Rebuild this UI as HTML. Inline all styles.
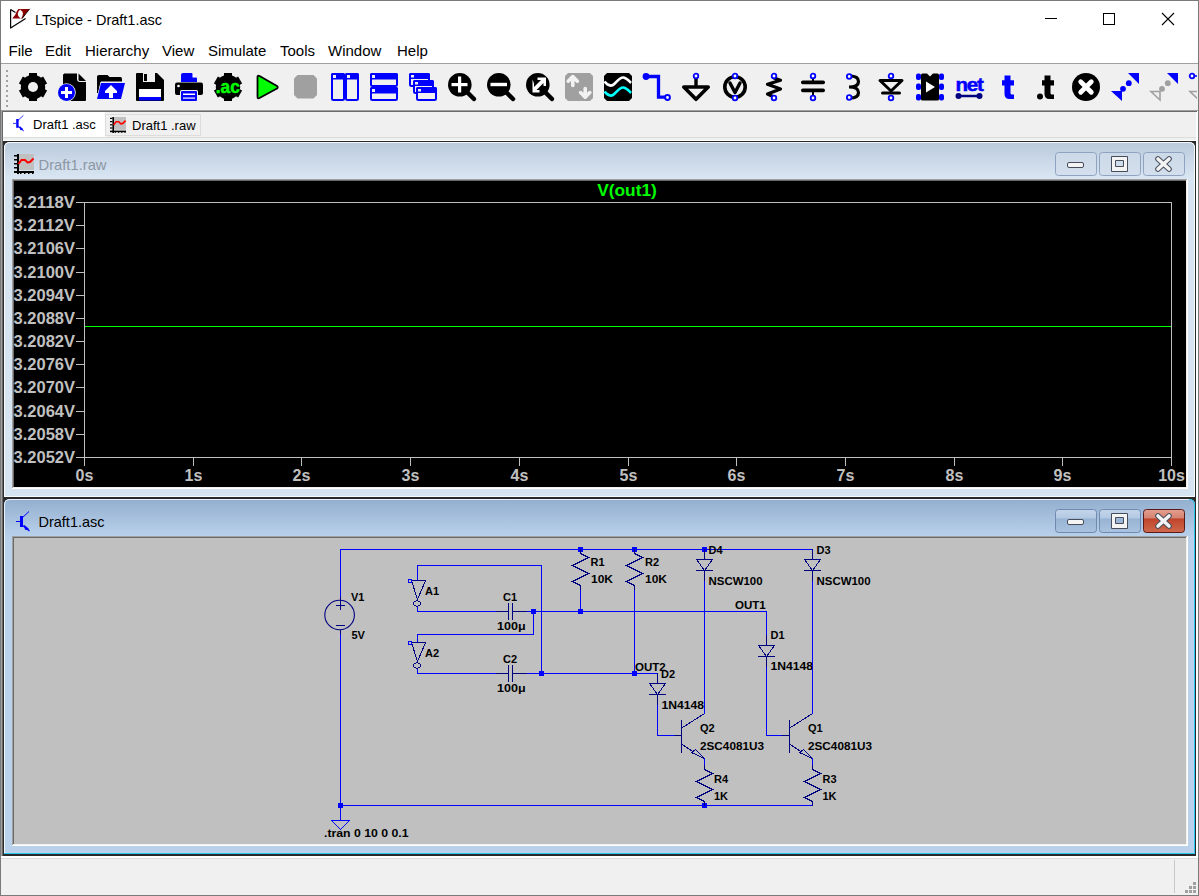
<!DOCTYPE html>
<html><head><meta charset="utf-8">
<style>
html,body{margin:0;padding:0;}
body{width:1199px;height:896px;position:relative;overflow:hidden;background:#f0f0f0;font-family:"Liberation Sans",sans-serif;}
svg{position:absolute;left:0;top:0;}
text{font-family:"Liberation Sans",sans-serif;}
</style></head><body>
<svg width="1199" height="896" viewBox="0 0 1199 896">
<defs>
<linearGradient id="tiA" x1="0" y1="0" x2="0" y2="1">
<stop offset="0" stop-color="#bacadc"/><stop offset="1" stop-color="#dae6f3"/>
</linearGradient>
<linearGradient id="tiB" x1="0" y1="0" x2="0" y2="1">
<stop offset="0" stop-color="#93afcf"/><stop offset="1" stop-color="#b9d1eb"/>
</linearGradient>
<linearGradient id="btnA" x1="0" y1="0" x2="0" y2="1">
<stop offset="0" stop-color="#ccd9e8"/><stop offset="1" stop-color="#d3dfec"/>
</linearGradient>
<linearGradient id="btnB" x1="0" y1="0" x2="0" y2="1">
<stop offset="0" stop-color="#c3d5ea"/><stop offset="0.38" stop-color="#b3c9e3"/><stop offset="0.40" stop-color="#98b3d3"/><stop offset="1" stop-color="#a9c3e0"/>
</linearGradient>
<linearGradient id="btnC" x1="0" y1="0" x2="0" y2="1">
<stop offset="0" stop-color="#e3a08f"/><stop offset="0.38" stop-color="#d58271"/><stop offset="0.40" stop-color="#c0432a"/><stop offset="1" stop-color="#cf6a4d"/>
</linearGradient>
</defs>

<!-- main window background -->
<rect x="0" y="0" width="1199" height="896" fill="#f0f0f0"/>
<!-- title + menu white -->
<rect x="0" y="0" width="1199" height="63" fill="#ffffff"/>
<rect x="0" y="63" width="1199" height="1" fill="#a0a0a0"/>
<!-- outer border -->
<rect x="0" y="0" width="1199" height="1" fill="#7a7a7a"/>
<rect x="0" y="0" width="1" height="896" fill="#7a7a7a"/>
<rect x="1198" y="0" width="1" height="896" fill="#7a7a7a"/>
<rect x="0" y="895" width="1199" height="1" fill="#7a7a7a"/>

<!-- app icon -->
<g>
<path d="M10.6 9.4 L10.6 28.1 L25.6 18.4" fill="none" stroke="#000" stroke-width="1.2" stroke-linejoin="round"/>
<path d="M10.6 9.4 L15.5 12.5" fill="none" stroke="#000" stroke-width="1.2"/>
<path d="M18.5 9 L20.5 9 Q18.2 11 17.8 13.5 Q17.6 16.5 21 18.6 L12.2 18.6 Q15.5 15.5 16.5 12 Q17.2 10 18.5 9 Z" fill="#8b0000"/>
<path d="M20 9 L29.6 9 L28 11 Q26 13 24.5 15.5 Q23.5 17.5 22 18.6 L21.2 18.6 Q22.8 16 22.9 13.5 Q23 11.2 20.6 10.3 Z" fill="#8b0000"/>
<path d="M22 18.6 L29.7 8.8" fill="none" stroke="#000" stroke-width="0.9"/>
</g>
<text x="35" y="24.5" font-size="15" fill="#000" textLength="127" lengthAdjust="spacingAndGlyphs">LTspice - Draft1.asc</text>
<!-- window controls -->
<rect x="1045" y="18" width="12" height="1" fill="#000"/>
<rect x="1103.5" y="13.5" width="11" height="11" fill="none" stroke="#000" stroke-width="1"/>
<path d="M1162 13 L1174 25 M1174 13 L1162 25" stroke="#000" stroke-width="1.1"/>

<!-- menu -->
<g font-size="15" fill="#000">
<text x="8.5" y="55.5">File</text>
<text x="45" y="55.5">Edit</text>
<text x="85" y="55.5">Hierarchy</text>
<text x="162" y="55.5">View</text>
<text x="208" y="55.5">Simulate</text>
<text x="280" y="55.5">Tools</text>
<text x="328" y="55.5">Window</text>
<text x="397" y="55.5">Help</text>
</g>

<!-- toolbar -->
<rect x="1" y="110" width="1197" height="1" fill="#a0a0a0"/>
<g fill="#a0a0a0">
<rect x="6" y="70" width="2" height="2"/><rect x="6" y="75" width="2" height="2"/><rect x="6" y="80" width="2" height="2"/><rect x="6" y="85" width="2" height="2"/><rect x="6" y="90" width="2" height="2"/><rect x="6" y="95" width="2" height="2"/><rect x="6" y="100" width="2" height="2"/><rect x="6" y="105" width="2" height="2"/>
</g>
<svg x="0" y="64" width="1197" height="46" overflow="hidden"><g transform="translate(0 -64)"><g transform="translate(19 73)"><g fill="#000"><circle cx="14" cy="14" r="12.2"/><rect x="10" y="0" width="8" height="6" transform="rotate(0 14 14)"/><rect x="10" y="0" width="8" height="6" transform="rotate(60 14 14)"/><rect x="10" y="0" width="8" height="6" transform="rotate(120 14 14)"/><rect x="10" y="0" width="8" height="6" transform="rotate(180 14 14)"/><rect x="10" y="0" width="8" height="6" transform="rotate(240 14 14)"/><rect x="10" y="0" width="8" height="6" transform="rotate(300 14 14)"/></g><circle cx="14" cy="14" r="5" fill="#f0f0f0"/></g>
<g transform="translate(58 73)"><path d="M6 1 Q5 1 5 2 L5 27 Q5 28 6 28 L27 28 Q28 28 28 27 L28 9 L22 9 Q19 9 19 6 L19 0.5 L6 0.5 Z" fill="#000"/>
<path d="M20.5 0.5 L28 8 L22 8 Q20.5 8 20.5 6.5 Z" fill="#000"/>
<circle cx="8.5" cy="19.5" r="9.3" fill="#f0f0f0"/>
<circle cx="8.5" cy="19.5" r="8.5" fill="#0000ff"/>
<rect x="3" y="18" width="11" height="3" fill="#fff"/><rect x="7" y="14" width="3" height="11" fill="#fff"/></g>
<g transform="translate(97 73)"><path d="M0 3.5 Q0 2 2 2 L10.5 2 L12.5 4 L23.5 4 Q25 4 25 6 L25 8.5 L4 8.5 L1 20 L0 20 Z" fill="#000"/>
<path d="M3.5 9 L28.5 9 L24.5 26.5 L-0.5 26.5 Z" fill="#f0f0f0"/>
<path d="M4 10 L28 10 L24 26 L0 26 Z" fill="#0000ff"/>
<path d="M14 12 L20 18 L20 20 L16 20 L16 25 L12 25 L12 20 L8 20 L8 18 Z" fill="#fff"/></g>
<g transform="translate(136 73)"><path d="M1 0 L21 0 L28 7 L28 27 Q28 28 27 28 L1 28 Q0 28 0 27 L0 1 Q0 0 1 0 Z" fill="#000"/>
<rect x="7" y="0" width="12" height="9" fill="#f0f0f0"/><rect x="8" y="1" width="3" height="7" fill="#000"/>
<rect x="3" y="16" width="22" height="8" fill="#fff"/><rect x="3" y="24" width="22" height="3.5" fill="#0000ff"/></g>
<g transform="translate(175 73)"><path d="M6 1.5 Q6 0 8 0 L17 0 L22 5 L22 9 L6 9 Z" fill="#0000ff"/>
<path d="M17.5 0 L22 4.5 L17.5 4.5 Z" fill="#fff"/>
<rect x="0" y="9.5" width="28" height="12.5" rx="2" fill="#000"/>
<circle cx="3.5" cy="13" r="1.3" fill="#fff"/>
<rect x="5" y="17" width="18" height="11" rx="1.5" fill="#f0f0f0"/>
<rect x="6" y="18" width="16" height="10" rx="1" fill="#0000ff"/>
<rect x="8" y="20.5" width="12" height="1.5" fill="#fff"/><rect x="8" y="24.5" width="12" height="1.2" fill="#fff"/></g>
<g transform="translate(214 73)"><g fill="#000"><circle cx="14" cy="14" r="12.2"/><rect x="10" y="0" width="8" height="6" transform="rotate(0 14 14)"/><rect x="10" y="0" width="8" height="6" transform="rotate(60 14 14)"/><rect x="10" y="0" width="8" height="6" transform="rotate(120 14 14)"/><rect x="10" y="0" width="8" height="6" transform="rotate(180 14 14)"/><rect x="10" y="0" width="8" height="6" transform="rotate(240 14 14)"/><rect x="10" y="0" width="8" height="6" transform="rotate(300 14 14)"/></g><text x="13.8" y="19.5" font-size="18.5" font-weight="bold" fill="#00ff00" stroke="#00ff00" stroke-width="0.5" text-anchor="middle" textLength="24" lengthAdjust="spacingAndGlyphs">.ac</text></g>
<g transform="translate(253 73)"><path d="M4.5 4 L4.5 24 Q4.5 26 6.5 25 L24 15.5 Q25.5 14 24 13 L6.5 3 Q4.5 2 4.5 4 Z" fill="#00ff00" stroke="#000" stroke-width="1.8" stroke-linejoin="round"/></g>
<g transform="translate(292 73)"><path d="M5.5 2 L21.5 2 L25 5.5 L25 22 L21.5 25.5 L5.5 25.5 L2 22 L2 5.5 Z" fill="#a0a0a0"/></g>
<g transform="translate(331 73)"><rect x="1" y="1" width="12" height="26" rx="1.5" fill="#f0f0f0" stroke="#0000ff" stroke-width="2"/>
<rect x="15" y="1" width="12" height="26" rx="1.5" fill="#f0f0f0" stroke="#0000ff" stroke-width="2"/>
<rect x="0" y="0" width="14" height="6.5" rx="1.5" fill="#0000ff"/><rect x="14" y="0" width="14" height="6.5" rx="1.5" fill="#0000ff"/>
<rect x="2" y="2" width="3" height="3" fill="#f0f0f0"/><rect x="16" y="2" width="3" height="3" fill="#f0f0f0"/></g>
<g transform="translate(370 73)"><rect x="1" y="1" width="26" height="12" rx="1.5" fill="#f0f0f0" stroke="#0000ff" stroke-width="2"/>
<rect x="1" y="15" width="26" height="12" rx="1.5" fill="#f0f0f0" stroke="#0000ff" stroke-width="2"/>
<rect x="0" y="0" width="28" height="6.5" rx="1.5" fill="#0000ff"/><rect x="0" y="14" width="28" height="6.5" rx="1.5" fill="#0000ff"/>
<rect x="2" y="2" width="3" height="3" fill="#f0f0f0"/><rect x="2" y="16" width="3" height="3" fill="#f0f0f0"/></g>
<g transform="translate(409 73)"><rect x="1" y="1" width="19" height="12" rx="1.5" fill="#f0f0f0" stroke="#0000ff" stroke-width="2"/><rect x="0" y="0" width="21" height="6" rx="1.5" fill="#0000ff"/><rect x="2" y="2" width="3" height="2.5" fill="#f0f0f0"/><rect x="5" y="8" width="19" height="12" rx="1.5" fill="#f0f0f0" stroke="#0000ff" stroke-width="2"/><rect x="4" y="7" width="21" height="6" rx="1.5" fill="#0000ff"/><rect x="6" y="9" width="3" height="2.5" fill="#f0f0f0"/><rect x="8" y="15" width="19" height="12" rx="1.5" fill="#f0f0f0" stroke="#0000ff" stroke-width="2"/><rect x="7" y="14" width="21" height="6" rx="1.5" fill="#0000ff"/><rect x="9" y="16" width="3" height="2.5" fill="#f0f0f0"/></g>
<g transform="translate(448 73)"><path d="M20 20 L26 26" stroke="#000" stroke-width="4.5" stroke-linecap="round"/><circle cx="11.8" cy="11.8" r="11.8" fill="#000"/><rect x="3.5" y="10" width="16" height="3.2" fill="#fff"/><rect x="10" y="3.5" width="3.2" height="16" fill="#fff"/></g>
<g transform="translate(487 73)"><path d="M20 20 L26 26" stroke="#000" stroke-width="4.5" stroke-linecap="round"/><circle cx="11.8" cy="11.8" r="11.8" fill="#000"/><rect x="3.5" y="9.8" width="16.5" height="3.4" fill="#fff"/></g>
<g transform="translate(526 73)"><path d="M20 20 L26 26" stroke="#000" stroke-width="4.5" stroke-linecap="round"/><circle cx="11.8" cy="11.8" r="11.8" fill="#000"/><path d="M6 6 L6 19 L13 19 L13 16.5 L10 16.5 L17 9.5 L17 12.5 L19.5 12.5 L19.5 4 L11 4 L11 6.5 L14.5 6.5 L7.5 13.5 L7.5 10 Z" transform="translate(0.5 0.5)" fill="#fff"/></g>
<g transform="translate(565 73)"><path d="M3 0 L25 0 L28 3 L28 25 L25 28 L3 28 L0 25 L0 3 Z" fill="#a0a0a0"/>
<g fill="none" stroke="#f2f2f2" stroke-width="3.6" stroke-linecap="round" stroke-linejoin="round">
<path d="M3.2 8.2 L7.8 3.6 L12.4 8.2 M7.8 4 L7.8 12.5"/>
<path d="M15.6 19.6 L20.2 24.2 L24.8 19.6 M20.2 15.5 L20.2 23.8"/></g></g>
<g transform="translate(604 73)"><path d="M3 0 L25 0 L28 3 L28 25 L25 28 L3 28 L0 25 L0 3 Z" fill="#000"/>
<path d="M0.5 8.5 C4 13, 7 13, 9 12 C12 10.5, 15 4, 19.5 4.5 C23 5, 25 8, 27 10" fill="none" stroke="#fff" stroke-width="2.6"/>
<path d="M0.5 18.5 C4 23, 7 23, 9 22 C12 20.5, 15 14, 19.5 14.5 C23 15, 25 18, 27 20" fill="none" stroke="#00ffff" stroke-width="2.6"/></g>
<g transform="translate(643 73)"><path d="M3 3.5 L15.5 3.5 L15.5 24.2 L22 24.2" fill="none" stroke="#0000ff" stroke-width="3.3"/>
<circle cx="3" cy="3.5" r="3.4" fill="#0000ff"/>
<circle cx="24.5" cy="24.5" r="2.4" fill="#fff" stroke="#0000ff" stroke-width="2"/></g>
<g transform="translate(682 73)"><rect x="12.3" y="5" width="3.4" height="8" fill="#000"/>
<path d="M1.8 14 L26.2 14 L14 26.3 Z" fill="none" stroke="#000" stroke-width="3.6" stroke-linejoin="round"/>
<circle cx="14" cy="3" r="2.3" fill="#fff" stroke="#0000ff" stroke-width="1.8"/></g>
<g transform="translate(721 73)"><circle cx="14" cy="14" r="10.2" fill="none" stroke="#000" stroke-width="3.6"/>
<path d="M9 10 L14 19.5 L19 10" fill="none" stroke="#000" stroke-width="3.4" stroke-linejoin="round" stroke-linecap="round"/>
<circle cx="14" cy="3" r="2.3" fill="#fff" stroke="#0000ff" stroke-width="1.8"/>
<circle cx="14" cy="25" r="2.3" fill="#fff" stroke="#0000ff" stroke-width="1.8"/></g>
<g transform="translate(760 73)"><path d="M14 5 L20.5 7.2 L7.5 11.2 L20.5 16 L7.5 21 L14 24" fill="none" stroke="#000" stroke-width="3.2" stroke-linejoin="round" stroke-linecap="round"/>
<circle cx="14" cy="3" r="2.3" fill="#fff" stroke="#0000ff" stroke-width="1.8"/>
<circle cx="14" cy="25" r="2.3" fill="#fff" stroke="#0000ff" stroke-width="1.8"/></g>
<g transform="translate(799 73)"><rect x="2" y="7.5" width="24" height="3.7" rx="1.8" fill="#000"/><rect x="2" y="15.6" width="24" height="3.7" rx="1.8" fill="#000"/>
<rect x="13" y="5" width="2" height="3" fill="#000"/><rect x="13" y="19" width="2" height="3" fill="#000"/>
<circle cx="14" cy="3" r="2.3" fill="#fff" stroke="#0000ff" stroke-width="1.8"/>
<circle cx="14" cy="25" r="2.3" fill="#fff" stroke="#0000ff" stroke-width="1.8"/></g>
<g transform="translate(838 73)"><path d="M12 3 Q20.5 3 20.5 8.5 Q20.5 14 11 14 Q20.5 14 20.5 19.5 Q20.5 25 12 25" fill="none" stroke="#000" stroke-width="3.2"/>
<circle cx="11.2" cy="3.5" r="2.3" fill="#fff" stroke="#0000ff" stroke-width="1.8"/>
<circle cx="11.2" cy="24.5" r="2.3" fill="#fff" stroke="#0000ff" stroke-width="1.8"/></g>
<g transform="translate(877 73)"><path d="M3 7.5 L25 7.5 L14 18 Z" fill="none" stroke="#000" stroke-width="3" stroke-linejoin="round"/>
<rect x="4" y="18.5" width="20" height="3" rx="1.5" fill="#000"/>
<circle cx="14" cy="3" r="2.3" fill="#fff" stroke="#0000ff" stroke-width="1.8"/>
<circle cx="14" cy="25" r="2.3" fill="#fff" stroke="#0000ff" stroke-width="1.8"/></g>
<g transform="translate(916 73)"><g fill="#0000ff">
<rect x="0" y="0.5" width="5" height="6.5" rx="2"/><rect x="0" y="10.5" width="5" height="6.5" rx="2"/><rect x="0" y="21" width="5" height="6.5" rx="2"/>
<rect x="23" y="0.5" width="5" height="6.5" rx="2"/><rect x="23" y="10.5" width="5" height="6.5" rx="2"/><rect x="23" y="21" width="5" height="6.5" rx="2"/></g>
<path d="M6.5 0.5 L11 0.5 L14 3.5 L17 0.5 L21.5 0.5 Q23 0.5 23 2 L23 26 Q23 27.5 21.5 27.5 L6.5 27.5 Q5 27.5 5 26 L5 2 Q5 0.5 6.5 0.5 Z" fill="#000"/>
<path d="M10 8.5 L19 14 L10 19.5 Z" fill="#fff"/></g>
<g transform="translate(955 73)"><text x="14" y="17.5" font-size="19" font-weight="bold" fill="#0000ff" text-anchor="middle" letter-spacing="-1.2" stroke="#0000ff" stroke-width="0.5" textLength="27" lengthAdjust="spacingAndGlyphs">net</text>
<path d="M3.5 23 L24 23" stroke="#000080" stroke-width="2.5"/>
<circle cx="3.5" cy="23" r="3" fill="#000080"/><circle cx="24.5" cy="23" r="3" fill="#000080"/></g>
<g transform="translate(994 73)"><path d="M10.5 2.5 L16.5 2.5 L16.5 7.2 L20 7.2 L20 12.5 L16.5 12.5 L16.5 20 Q16.5 21.5 18 21.5 L20 21.5 L20 26 L15.5 26 Q10.5 26 10.5 21 L10.5 12.5 L8 12.5 L8 7.2 L10.5 7.2 Z" fill="#0000ff"/></g>
<g transform="translate(1033 73)"><path d="M10.5 2.5 L16.5 2.5 L16.5 7.2 L20 7.2 L20 12.5 L16.5 12.5 L16.5 20 Q16.5 21.5 18 21.5 L20 21.5 L20 26 L15.5 26 Q10.5 26 10.5 21 L10.5 12.5 L8 12.5 L8 7.2 L10.5 7.2 Z" transform="translate(1 0)" fill="#000"/><circle cx="7" cy="23.5" r="3" fill="#000"/></g>
<g transform="translate(1072 73)"><circle cx="14" cy="14" r="14" fill="#000"/><path d="M8.7 8.7 L19.3 19.3 M19.3 8.7 L8.7 19.3" stroke="#fff" stroke-width="4.8" stroke-linecap="round"/></g>
<g transform="translate(1111 73)"><path d="M17 0 L28 0 L28 11 Z" fill="#0000ff"/><path d="M0 18 L11 18 L11 28 Z" fill="#0000ff"/>
<circle cx="17.8" cy="10.2" r="2.9" fill="#0000ff"/><circle cx="12" cy="15.8" r="2.9" fill="#0000ff"/></g>
<g transform="translate(1150 73)"><path d="M17 0 L28 0 L28 11 Z" fill="#0000ff"/><path d="M1 18.5 L10 18.5 L10 27 Z" fill="none" stroke="#a0a0a0" stroke-width="1.6"/>
<circle cx="17.8" cy="10.2" r="2.9" fill="#a0a0a0"/><circle cx="12" cy="15.8" r="2.9" fill="#a0a0a0"/></g>
<g transform="translate(1189 73)"><circle cx="3" cy="3" r="2.3" fill="#fff" stroke="#0000ff" stroke-width="1.8"/><path d="M5 3 L10 3" stroke="#0000ff" stroke-width="1.5"/><path d="M1 18.5 L10 18.5 L10 27 Z" fill="none" stroke="#a0a0a0" stroke-width="1.6"/></g></g></svg>

<!-- tabs -->
<rect x="1" y="111" width="1197" height="30" fill="#f0f0f0"/>
<rect x="3" y="112" width="102" height="26" fill="#ffffff"/>
<rect x="105.5" y="114.5" width="95" height="21" fill="#f0f0f0" stroke="#dcdcdc" stroke-width="1"/>
<rect x="1" y="137" width="1197" height="1" fill="#dcdcdc"/>
<rect x="3" y="140" width="1193" height="1" fill="#ffffff"/>
<g transform="translate(13 115) scale(0.8)" fill="none" stroke="#0000ff"><path d="M0 10.5 L4 10.5" stroke-width="1"/><rect x="4" y="5" width="3" height="11" fill="#0000ff" stroke="none"/><path d="M6 7 L13 0.5" stroke-width="1"/><path d="M6 14 L13.5 20" stroke-width="1.2"/><path d="M8.5 14.5 L12.5 18 L9.5 18.5 Z" fill="#0000ff" stroke-width="1"/></g><g transform="translate(110 117) scale(0.8)"><rect x="4" y="0" width="16" height="16" fill="#c0c0c0"/><rect x="3" y="0" width="2" height="20" fill="#000"/><rect x="0" y="17" width="20" height="2" fill="#000"/><rect x="0" y="1" width="3" height="1.5" fill="#000"/><rect x="6" y="19" width="1.5" height="1" fill="#000"/><rect x="0" y="5" width="3" height="1.5" fill="#000"/><rect x="10" y="19" width="1.5" height="1" fill="#000"/><rect x="0" y="9" width="3" height="1.5" fill="#000"/><rect x="14" y="19" width="1.5" height="1" fill="#000"/><rect x="0" y="13" width="3" height="1.5" fill="#000"/><rect x="18" y="19" width="1.5" height="1" fill="#000"/><path d="M4.5 10 L7.5 6 L11 6 L13.5 8.5 L16 8 L19.5 4.5" fill="none" stroke="#ff0000" stroke-width="2"/></g>
<text x="33" y="129" font-size="13" fill="#000">Draft1 .asc</text>
<text x="132" y="130" font-size="13" fill="#000">Draft1 .raw</text>

<!-- MDI client border -->
<rect x="3" y="141" width="1193" height="715" fill="#2a2a2a"/>
<rect x="1196" y="111" width="2" height="746" fill="#ffffff"/>
<rect x="1" y="110" width="1" height="747" fill="#a0a0a0"/>
<rect x="2" y="111" width="1" height="746" fill="#696969"/>
<rect x="2" y="111" width="1195" height="1" fill="#696969"/>

<!-- ===== waveform window ===== -->
<path d="M4 148 Q4 142 10 142 L1189 142 Q1195 142 1195 148 L1195 497 L4 497 Z" fill="#d6e3f1"/>
<path d="M4 148 Q4 142 10 142 L1189 142 Q1195 142 1195 148 L1195 179 L4 179 Z" fill="url(#tiA)"/>
<path d="M4.5 497 L4.5 148 Q4.5 142.5 10 142.5 L1189 142.5 Q1194.5 142.5 1194.5 148 L1194.5 496.5 L4.5 496.5" fill="none" stroke="#ffffff" stroke-opacity="0.85" stroke-width="1"/>
<g transform="translate(14 154) scale(1)"><rect x="4" y="0" width="16" height="16" fill="#c0c0c0"/><rect x="3" y="0" width="2" height="20" fill="#000"/><rect x="0" y="17" width="20" height="2" fill="#000"/><rect x="0" y="1" width="3" height="1.5" fill="#000"/><rect x="6" y="19" width="1.5" height="1" fill="#000"/><rect x="0" y="5" width="3" height="1.5" fill="#000"/><rect x="10" y="19" width="1.5" height="1" fill="#000"/><rect x="0" y="9" width="3" height="1.5" fill="#000"/><rect x="14" y="19" width="1.5" height="1" fill="#000"/><rect x="0" y="13" width="3" height="1.5" fill="#000"/><rect x="18" y="19" width="1.5" height="1" fill="#000"/><path d="M4.5 10 L7.5 6 L11 6 L13.5 8.5 L16 8 L19.5 4.5" fill="none" stroke="#ff0000" stroke-width="2"/></g>
<text x="38.5" y="170" font-size="15" fill="#8d97a4" textLength="68" lengthAdjust="spacingAndGlyphs">Draft1.raw</text>
<g>
<rect x="1055.5" y="152.5" width="41" height="23" rx="3" fill="url(#btnA)" stroke="#8fa3c0" stroke-width="1"/>
<rect x="1099.5" y="152.5" width="41" height="23" rx="3" fill="url(#btnA)" stroke="#8fa3c0" stroke-width="1"/>
<rect x="1143.5" y="152.5" width="41" height="23" rx="3" fill="url(#btnA)" stroke="#8fa3c0" stroke-width="1"/>
</g>
<rect x="1067.5" y="162.5" width="16" height="5" rx="1.5" fill="#f4f4f4" stroke="#464c5a" stroke-width="1"/>
<path fill-rule="evenodd" d="M1111.5 156.5 h16 v15 h-16 Z M1115.5 160.5 h8 v6 h-8 Z" fill="#f4f4f4" stroke="#464c5a" stroke-width="1"/>
<path d="M1158 159 L1169 169 M1169 159 L1158 169" stroke="#464c5a" stroke-width="5.6" stroke-linecap="round"/>
<path d="M1158 159 L1169 169 M1169 159 L1158 169" stroke="#f4f4f4" stroke-width="3.6" stroke-linecap="round"/>
<!-- plot area -->
<rect x="12" y="179" width="1176" height="310" fill="#ffffff"/>
<rect x="12" y="179" width="1175" height="309" fill="#a0a0a0"/>
<rect x="13" y="180" width="1174" height="308" fill="#f0f0f0"/>
<rect x="13" y="180" width="1173" height="307" fill="#696969"/>
<rect x="14" y="181" width="1172" height="306" fill="#000000"/>
<rect x="84.5" y="202.5" width="1087" height="255" fill="none" stroke="#c0c0c0" stroke-width="1"/>
<rect x="76" y="202" width="8" height="1" fill="#c0c0c0"/>
<text x="75" y="208" font-size="16" font-weight="bold" fill="#c0c0c0" text-anchor="end" textLength="61.5" lengthAdjust="spacingAndGlyphs">3.2118V</text>
<rect x="76" y="225" width="8" height="1" fill="#c0c0c0"/>
<text x="75" y="231" font-size="16" font-weight="bold" fill="#c0c0c0" text-anchor="end" textLength="61.5" lengthAdjust="spacingAndGlyphs">3.2112V</text>
<rect x="76" y="248" width="8" height="1" fill="#c0c0c0"/>
<text x="75" y="254" font-size="16" font-weight="bold" fill="#c0c0c0" text-anchor="end" textLength="61.5" lengthAdjust="spacingAndGlyphs">3.2106V</text>
<rect x="76" y="272" width="8" height="1" fill="#c0c0c0"/>
<text x="75" y="278" font-size="16" font-weight="bold" fill="#c0c0c0" text-anchor="end" textLength="61.5" lengthAdjust="spacingAndGlyphs">3.2100V</text>
<rect x="76" y="295" width="8" height="1" fill="#c0c0c0"/>
<text x="75" y="301" font-size="16" font-weight="bold" fill="#c0c0c0" text-anchor="end" textLength="61.5" lengthAdjust="spacingAndGlyphs">3.2094V</text>
<rect x="76" y="318" width="8" height="1" fill="#c0c0c0"/>
<text x="75" y="324" font-size="16" font-weight="bold" fill="#c0c0c0" text-anchor="end" textLength="61.5" lengthAdjust="spacingAndGlyphs">3.2088V</text>
<rect x="76" y="341" width="8" height="1" fill="#c0c0c0"/>
<text x="75" y="347" font-size="16" font-weight="bold" fill="#c0c0c0" text-anchor="end" textLength="61.5" lengthAdjust="spacingAndGlyphs">3.2082V</text>
<rect x="76" y="364" width="8" height="1" fill="#c0c0c0"/>
<text x="75" y="370" font-size="16" font-weight="bold" fill="#c0c0c0" text-anchor="end" textLength="61.5" lengthAdjust="spacingAndGlyphs">3.2076V</text>
<rect x="76" y="387" width="8" height="1" fill="#c0c0c0"/>
<text x="75" y="393" font-size="16" font-weight="bold" fill="#c0c0c0" text-anchor="end" textLength="61.5" lengthAdjust="spacingAndGlyphs">3.2070V</text>
<rect x="76" y="411" width="8" height="1" fill="#c0c0c0"/>
<text x="75" y="417" font-size="16" font-weight="bold" fill="#c0c0c0" text-anchor="end" textLength="61.5" lengthAdjust="spacingAndGlyphs">3.2064V</text>
<rect x="76" y="434" width="8" height="1" fill="#c0c0c0"/>
<text x="75" y="440" font-size="16" font-weight="bold" fill="#c0c0c0" text-anchor="end" textLength="61.5" lengthAdjust="spacingAndGlyphs">3.2058V</text>
<rect x="76" y="457" width="8" height="1" fill="#c0c0c0"/>
<text x="75" y="463" font-size="16" font-weight="bold" fill="#c0c0c0" text-anchor="end" textLength="61.5" lengthAdjust="spacingAndGlyphs">3.2052V</text>
<rect x="84" y="457" width="1" height="9" fill="#c0c0c0"/>
<text x="84.5" y="480.5" font-size="16" font-weight="bold" fill="#c0c0c0" text-anchor="middle">0s</text>
<rect x="193" y="457" width="1" height="9" fill="#c0c0c0"/>
<text x="193.5" y="480.5" font-size="16" font-weight="bold" fill="#c0c0c0" text-anchor="middle">1s</text>
<rect x="301" y="457" width="1" height="9" fill="#c0c0c0"/>
<text x="301.5" y="480.5" font-size="16" font-weight="bold" fill="#c0c0c0" text-anchor="middle">2s</text>
<rect x="410" y="457" width="1" height="9" fill="#c0c0c0"/>
<text x="410.5" y="480.5" font-size="16" font-weight="bold" fill="#c0c0c0" text-anchor="middle">3s</text>
<rect x="519" y="457" width="1" height="9" fill="#c0c0c0"/>
<text x="519.5" y="480.5" font-size="16" font-weight="bold" fill="#c0c0c0" text-anchor="middle">4s</text>
<rect x="628" y="457" width="1" height="9" fill="#c0c0c0"/>
<text x="628.5" y="480.5" font-size="16" font-weight="bold" fill="#c0c0c0" text-anchor="middle">5s</text>
<rect x="736" y="457" width="1" height="9" fill="#c0c0c0"/>
<text x="736.5" y="480.5" font-size="16" font-weight="bold" fill="#c0c0c0" text-anchor="middle">6s</text>
<rect x="845" y="457" width="1" height="9" fill="#c0c0c0"/>
<text x="845.5" y="480.5" font-size="16" font-weight="bold" fill="#c0c0c0" text-anchor="middle">7s</text>
<rect x="954" y="457" width="1" height="9" fill="#c0c0c0"/>
<text x="954.5" y="480.5" font-size="16" font-weight="bold" fill="#c0c0c0" text-anchor="middle">8s</text>
<rect x="1062" y="457" width="1" height="9" fill="#c0c0c0"/>
<text x="1062.5" y="480.5" font-size="16" font-weight="bold" fill="#c0c0c0" text-anchor="middle">9s</text>
<rect x="1171" y="457" width="1" height="9" fill="#c0c0c0"/>
<text x="1171.5" y="480.5" font-size="16" font-weight="bold" fill="#c0c0c0" text-anchor="middle">10s</text>
<rect x="85" y="326" width="1086" height="1" fill="#00ff00"/>
<text x="627" y="196" font-size="16" font-weight="bold" fill="#00ff00" text-anchor="middle" textLength="59.5" lengthAdjust="spacingAndGlyphs">V(out1)</text>

<!-- separator -->

<!-- ===== schematic window ===== -->
<path d="M4 505 Q4 499 10 499 L1189 499 Q1195 499 1195 505 L1195 854 L4 854 Z" fill="#b9d1ea"/>
<path d="M4 505 Q4 499 10 499 L1189 499 Q1195 499 1195 505 L1195 537 L4 537 Z" fill="url(#tiB)"/>
<path d="M4.5 854 L4.5 505 Q4.5 499.5 10 499.5 L1189 499.5" fill="none" stroke="#ffffff" stroke-opacity="0.8" stroke-width="1"/>
<path d="M1189 499.5 Q1194.5 499.5 1194.5 505 L1194.5 853.5 L4 853.5" fill="none" stroke="#29c8f2" stroke-width="1"/>
<g transform="translate(16 511) scale(1)" fill="none" stroke="#0000ff"><path d="M0 10.5 L4 10.5" stroke-width="1"/><rect x="4" y="5" width="3" height="11" fill="#0000ff" stroke="none"/><path d="M6 7 L13 0.5" stroke-width="1"/><path d="M6 14 L13.5 20" stroke-width="1.2"/><path d="M8.5 14.5 L12.5 18 L9.5 18.5 Z" fill="#0000ff" stroke-width="1"/></g>
<text x="38.5" y="527" font-size="15" fill="#000" textLength="66" lengthAdjust="spacingAndGlyphs">Draft1.asc</text>
<g>
<rect x="1055.5" y="509.5" width="41" height="23" rx="3" fill="url(#btnB)" stroke="#6f89b0" stroke-width="1"/>
<rect x="1099.5" y="509.5" width="41" height="23" rx="3" fill="url(#btnB)" stroke="#6f89b0" stroke-width="1"/>
<rect x="1143.5" y="509.5" width="41" height="23" rx="3" fill="url(#btnC)" stroke="#5a1a1a" stroke-width="1"/>
</g>
<rect x="1067.5" y="519.5" width="16" height="5" rx="1.5" fill="#f4f4f4" stroke="#464c5a" stroke-width="1"/>
<path fill-rule="evenodd" d="M1111.5 513.5 h16 v15 h-16 Z M1115.5 517.5 h8 v6 h-8 Z" fill="#f4f4f4" stroke="#464c5a" stroke-width="1"/>
<path d="M1158 516 L1169 526 M1169 516 L1158 526" stroke="#464c5a" stroke-width="5.6" stroke-linecap="round"/>
<path d="M1158 516 L1169 526 M1169 516 L1158 526" stroke="#f4f4f4" stroke-width="3.6" stroke-linecap="round"/>
<rect x="12" y="536" width="1176" height="310" fill="#ffffff"/>
<rect x="12" y="536" width="1175" height="309" fill="#a0a0a0"/>
<rect x="13" y="537" width="1174" height="308" fill="#f0f0f0"/>
<rect x="13" y="537" width="1173" height="307" fill="#696969"/>
<rect x="14" y="538" width="1172" height="306" fill="#c0c0c0"/>
<rect x="340" y="549" width="473" height="1" fill="#0000ff"/>
<rect x="340" y="549" width="1" height="49" fill="#0000ff"/>
<rect x="340" y="634" width="1" height="172" fill="#0000ff"/>
<rect x="340" y="805" width="473" height="1" fill="#0000ff"/>
<rect x="340" y="805" width="1" height="16" fill="#0000ff"/>
<rect x="417" y="565" width="1" height="16" fill="#0000ff"/>
<rect x="417" y="565" width="125" height="1" fill="#0000ff"/>
<rect x="541" y="565" width="1" height="109" fill="#0000ff"/>
<rect x="417" y="607" width="1" height="5" fill="#0000ff"/>
<rect x="417" y="611" width="80" height="1" fill="#0000ff"/>
<rect x="526" y="611" width="241" height="1" fill="#0000ff"/>
<rect x="766" y="611" width="1" height="25" fill="#0000ff"/>
<rect x="533" y="611" width="1" height="24" fill="#0000ff"/>
<rect x="417" y="634" width="117" height="1" fill="#0000ff"/>
<rect x="417" y="634" width="1" height="9" fill="#0000ff"/>
<rect x="417" y="669" width="1" height="5" fill="#0000ff"/>
<rect x="417" y="673" width="80" height="1" fill="#0000ff"/>
<rect x="526" y="673" width="132" height="1" fill="#0000ff"/>
<rect x="657" y="673" width="1" height="11" fill="#0000ff"/>
<rect x="580" y="589" width="1" height="23" fill="#0000ff"/>
<rect x="634" y="589" width="1" height="85" fill="#0000ff"/>
<rect x="704" y="580" width="1" height="134" fill="#0000ff"/>
<rect x="812" y="549" width="1" height="1" fill="#0000ff"/>
<rect x="812" y="580" width="1" height="134" fill="#0000ff"/>
<rect x="766" y="666" width="1" height="70" fill="#0000ff"/>
<rect x="766" y="735" width="17" height="1" fill="#0000ff"/>
<rect x="657" y="704" width="1" height="32" fill="#0000ff"/>
<rect x="657" y="735" width="18" height="1" fill="#0000ff"/>
<rect x="704" y="758" width="1" height="12" fill="#0000ff"/>
<rect x="812" y="758" width="1" height="12" fill="#0000ff"/>
<rect x="704" y="801" width="1" height="5" fill="#0000ff"/>
<rect x="812" y="801" width="1" height="5" fill="#0000ff"/>
<rect x="578" y="547" width="5" height="5" fill="#0000ff"/>
<rect x="632" y="547" width="5" height="5" fill="#0000ff"/>
<rect x="702" y="547" width="5" height="5" fill="#0000ff"/>
<rect x="531" y="609" width="5" height="5" fill="#0000ff"/>
<rect x="578" y="609" width="5" height="5" fill="#0000ff"/>
<rect x="539" y="671" width="5" height="5" fill="#0000ff"/>
<rect x="632" y="671" width="5" height="5" fill="#0000ff"/>
<rect x="338" y="803" width="5" height="5" fill="#0000ff"/>
<rect x="702" y="803" width="5" height="5" fill="#0000ff"/>
<circle cx="339.6" cy="615" r="14.8" fill="none" stroke="#000080" stroke-width="1.1"/>
<rect x="340" y="597" width="1" height="13" fill="#000080"/>
<rect x="336" y="605" width="9" height="1" fill="#000080"/>
<rect x="336" y="625" width="9" height="1" fill="#000080"/>
<rect x="340" y="630" width="1" height="4" fill="#000080"/>
<path d="M331.5 820.5 L349.5 820.5 L340.5 829.5 L331.5 820.5" fill="none" stroke="#0000ff" stroke-width="1" shape-rendering="crispEdges"/>
<path d="M411.5 580.5 L425.5 580.5 L417.5 599.5 L411.5 580.5" fill="none" stroke="#000080" stroke-width="1" shape-rendering="crispEdges"/>
<rect x="416" y="600" width="2" height="1" fill="#000080"/>
<rect x="414" y="601" width="2" height="1" fill="#000080"/>
<rect x="418" y="601" width="2" height="1" fill="#000080"/>
<rect x="413" y="602" width="1" height="3" fill="#000080"/>
<rect x="420" y="602" width="1" height="3" fill="#000080"/>
<rect x="414" y="605" width="2" height="1" fill="#000080"/>
<rect x="418" y="605" width="2" height="1" fill="#000080"/>
<rect x="416" y="606" width="2" height="1" fill="#000080"/>
<rect x="408.5" y="579.5" width="3" height="3" fill="none" stroke="#0000ff" stroke-width="1"/>
<path d="M411.5 642.5 L425.5 642.5 L417.5 661.5 L411.5 642.5" fill="none" stroke="#000080" stroke-width="1" shape-rendering="crispEdges"/>
<rect x="416" y="662" width="2" height="1" fill="#000080"/>
<rect x="414" y="663" width="2" height="1" fill="#000080"/>
<rect x="418" y="663" width="2" height="1" fill="#000080"/>
<rect x="413" y="664" width="1" height="3" fill="#000080"/>
<rect x="420" y="664" width="1" height="3" fill="#000080"/>
<rect x="414" y="667" width="2" height="1" fill="#000080"/>
<rect x="418" y="667" width="2" height="1" fill="#000080"/>
<rect x="416" y="668" width="2" height="1" fill="#000080"/>
<rect x="408.5" y="641.5" width="3" height="3" fill="none" stroke="#0000ff" stroke-width="1"/>
<rect x="496" y="611" width="13" height="1" fill="#000080"/>
<rect x="508" y="603" width="1" height="17" fill="#000080"/>
<rect x="512" y="603" width="1" height="17" fill="#000080"/>
<rect x="512" y="611" width="15" height="1" fill="#000080"/>
<rect x="496" y="673" width="13" height="1" fill="#000080"/>
<rect x="508" y="665" width="1" height="17" fill="#000080"/>
<rect x="512" y="665" width="1" height="17" fill="#000080"/>
<rect x="512" y="673" width="15" height="1" fill="#000080"/>
<rect x="580" y="549" width="1" height="4" fill="#000080"/>
<path d="M580.5 553.5 L588.5 557.5 L572.5 565.5 L588.5 573.5 L572.5 581.5 L580.5 585.5" fill="none" stroke="#000080" stroke-width="1" shape-rendering="crispEdges"/>
<rect x="580" y="585" width="1" height="5" fill="#000080"/>
<rect x="634" y="549" width="1" height="4" fill="#000080"/>
<path d="M634.5 553.5 L642.5 557.5 L626.5 565.5 L642.5 573.5 L626.5 581.5 L634.5 585.5" fill="none" stroke="#000080" stroke-width="1" shape-rendering="crispEdges"/>
<rect x="634" y="585" width="1" height="5" fill="#000080"/>
<rect x="704" y="765" width="1" height="4" fill="#000080"/>
<path d="M704.5 769.5 L712.5 773.5 L696.5 781.5 L712.5 789.5 L696.5 797.5 L704.5 801.5" fill="none" stroke="#000080" stroke-width="1" shape-rendering="crispEdges"/>
<rect x="704" y="801" width="1" height="5" fill="#000080"/>
<rect x="812" y="765" width="1" height="4" fill="#000080"/>
<path d="M812.5 769.5 L820.5 773.5 L804.5 781.5 L820.5 789.5 L804.5 797.5 L812.5 801.5" fill="none" stroke="#000080" stroke-width="1" shape-rendering="crispEdges"/>
<rect x="812" y="801" width="1" height="5" fill="#000080"/>
<rect x="704" y="549" width="1" height="11" fill="#000080"/>
<path d="M696.5 559.5 L712.5 559.5 L704.5 570.5 L696.5 559.5" fill="none" stroke="#000080" stroke-width="1" shape-rendering="crispEdges"/>
<rect x="696" y="570" width="17" height="1" fill="#000080"/>
<rect x="704" y="570" width="1" height="11" fill="#000080"/>
<rect x="812" y="549" width="1" height="11" fill="#000080"/>
<path d="M804.5 559.5 L820.5 559.5 L812.5 570.5 L804.5 559.5" fill="none" stroke="#000080" stroke-width="1" shape-rendering="crispEdges"/>
<rect x="804" y="570" width="17" height="1" fill="#000080"/>
<rect x="812" y="570" width="1" height="11" fill="#000080"/>
<rect x="766" y="635" width="1" height="11" fill="#000080"/>
<path d="M758.5 645.5 L774.5 645.5 L766.5 656.5 L758.5 645.5" fill="none" stroke="#000080" stroke-width="1" shape-rendering="crispEdges"/>
<rect x="758" y="656" width="17" height="1" fill="#000080"/>
<rect x="766" y="656" width="1" height="11" fill="#000080"/>
<rect x="657" y="673" width="1" height="11" fill="#000080"/>
<path d="M649.5 683.5 L665.5 683.5 L657.5 694.5 L649.5 683.5" fill="none" stroke="#000080" stroke-width="1" shape-rendering="crispEdges"/>
<rect x="649" y="694" width="17" height="1" fill="#000080"/>
<rect x="657" y="694" width="1" height="11" fill="#000080"/>
<rect x="674" y="735" width="8" height="1" fill="#000080"/>
<rect x="681" y="720" width="1" height="33" fill="#000080"/>
<path d="M682.5 727.5 L704.5 713.5" fill="none" stroke="#000080" stroke-width="1" shape-rendering="crispEdges"/>
<path d="M682.5 744.5 L692.5 751.5" fill="none" stroke="#000080" stroke-width="1" shape-rendering="crispEdges"/>
<path d="M691.5 752.5 L704.5 758.5" fill="none" stroke="#000080" stroke-width="1" shape-rendering="crispEdges"/>
<path d="M695.5 749.5 L704.5 758.5" fill="none" stroke="#000080" stroke-width="1" shape-rendering="crispEdges"/>
<path d="M691.5 752.5 L695.5 749.5" fill="none" stroke="#000080" stroke-width="1" shape-rendering="crispEdges"/>
<path d="M692.5 751.5 L694.5 750.5" fill="none" stroke="#000080" stroke-width="1" shape-rendering="crispEdges"/>
<rect x="782" y="735" width="8" height="1" fill="#000080"/>
<rect x="789" y="720" width="1" height="33" fill="#000080"/>
<path d="M790.5 727.5 L812.5 713.5" fill="none" stroke="#000080" stroke-width="1" shape-rendering="crispEdges"/>
<path d="M790.5 744.5 L800.5 751.5" fill="none" stroke="#000080" stroke-width="1" shape-rendering="crispEdges"/>
<path d="M799.5 752.5 L812.5 758.5" fill="none" stroke="#000080" stroke-width="1" shape-rendering="crispEdges"/>
<path d="M803.5 749.5 L812.5 758.5" fill="none" stroke="#000080" stroke-width="1" shape-rendering="crispEdges"/>
<path d="M799.5 752.5 L803.5 749.5" fill="none" stroke="#000080" stroke-width="1" shape-rendering="crispEdges"/>
<path d="M800.5 751.5 L802.5 750.5" fill="none" stroke="#000080" stroke-width="1" shape-rendering="crispEdges"/>
<text x="351" y="601" font-size="11" font-weight="bold" fill="#000">V1</text>
<text x="351.5" y="639" font-size="11" font-weight="bold" fill="#000">5V</text>
<text x="425" y="595" font-size="11" font-weight="bold" fill="#000">A1</text>
<text x="425" y="657" font-size="11" font-weight="bold" fill="#000">A2</text>
<text x="503" y="601" font-size="11" font-weight="bold" fill="#000">C1</text>
<text x="497" y="630" font-size="11" font-weight="bold" fill="#000" textLength="28.6" lengthAdjust="spacingAndGlyphs">100μ</text>
<text x="503" y="663" font-size="11" font-weight="bold" fill="#000">C2</text>
<text x="497" y="692" font-size="11" font-weight="bold" fill="#000" textLength="28.6" lengthAdjust="spacingAndGlyphs">100μ</text>
<text x="590.5" y="566" font-size="11" font-weight="bold" fill="#000">R1</text>
<text x="591" y="583" font-size="11" font-weight="bold" fill="#000" textLength="22" lengthAdjust="spacingAndGlyphs">10K</text>
<text x="645" y="566" font-size="11" font-weight="bold" fill="#000">R2</text>
<text x="645" y="583" font-size="11" font-weight="bold" fill="#000" textLength="22" lengthAdjust="spacingAndGlyphs">10K</text>
<text x="708.5" y="554" font-size="11" font-weight="bold" fill="#000">D4</text>
<text x="708.5" y="585" font-size="11" font-weight="bold" fill="#000" textLength="54" lengthAdjust="spacingAndGlyphs">NSCW100</text>
<text x="816.5" y="554" font-size="11" font-weight="bold" fill="#000">D3</text>
<text x="816.5" y="585" font-size="11" font-weight="bold" fill="#000" textLength="54" lengthAdjust="spacingAndGlyphs">NSCW100</text>
<text x="735" y="609" font-size="11" font-weight="bold" fill="#000" textLength="30.8" lengthAdjust="spacingAndGlyphs">OUT1</text>
<text x="770.5" y="639" font-size="11" font-weight="bold" fill="#000">D1</text>
<text x="770.5" y="670" font-size="11" font-weight="bold" fill="#000" textLength="42.5" lengthAdjust="spacingAndGlyphs">1N4148</text>
<text x="635" y="671" font-size="11" font-weight="bold" fill="#000" textLength="30.8" lengthAdjust="spacingAndGlyphs">OUT2</text>
<text x="661" y="678" font-size="11" font-weight="bold" fill="#000">D2</text>
<text x="661.5" y="709" font-size="11" font-weight="bold" fill="#000" textLength="42.5" lengthAdjust="spacingAndGlyphs">1N4148</text>
<text x="700" y="732" font-size="11" font-weight="bold" fill="#000">Q2</text>
<text x="700" y="750" font-size="11" font-weight="bold" fill="#000" textLength="64" lengthAdjust="spacingAndGlyphs">2SC4081U3</text>
<text x="714" y="783" font-size="11" font-weight="bold" fill="#000">R4</text>
<text x="714" y="800" font-size="11" font-weight="bold" fill="#000">1K</text>
<text x="808" y="732" font-size="11" font-weight="bold" fill="#000">Q1</text>
<text x="808" y="750" font-size="11" font-weight="bold" fill="#000" textLength="64" lengthAdjust="spacingAndGlyphs">2SC4081U3</text>
<text x="822.5" y="783" font-size="11" font-weight="bold" fill="#000">R3</text>
<text x="822.5" y="800" font-size="11" font-weight="bold" fill="#000">1K</text>
<text x="324" y="837" font-size="11" font-weight="bold" fill="#000" textLength="84.5" lengthAdjust="spacingAndGlyphs">.tran 0 10 0 0.1</text>

<!-- status bar -->
<rect x="1" y="856" width="1197" height="2" fill="#ffffff"/>
<rect x="1" y="858" width="1197" height="1" fill="#dcdcdc"/>
<rect x="1174" y="860" width="1" height="33" fill="#c8c8c8"/>
<g fill="#a0a0a0">
<rect x="1193" y="882" width="3" height="3"/>
<rect x="1189" y="886" width="3" height="3"/><rect x="1193" y="886" width="3" height="3"/>
<rect x="1185" y="890" width="3" height="3"/><rect x="1189" y="890" width="3" height="3"/><rect x="1193" y="890" width="3" height="3"/>
</g>
</svg>
</body></html>
